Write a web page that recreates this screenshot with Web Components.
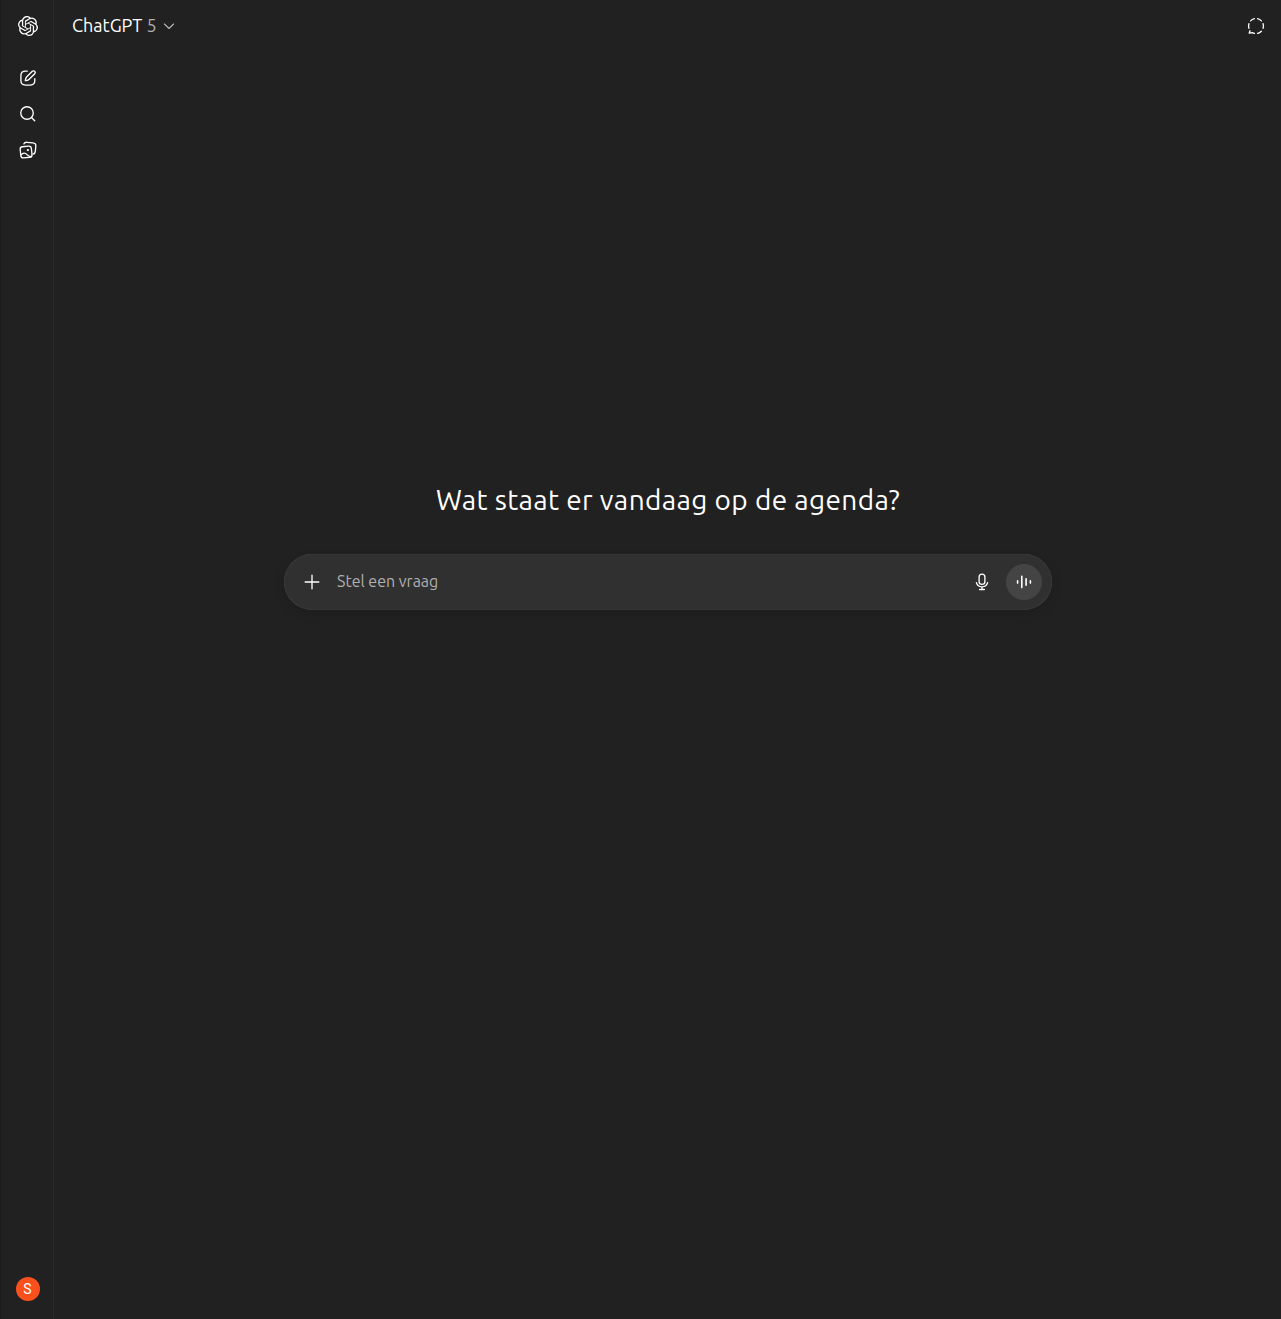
<!DOCTYPE html>
<html lang="nl">
<head>
<meta charset="utf-8">
<title>ChatGPT</title>
<style>
html,body{margin:0;height:100%;background:#212121;color:#fff;font-family:Ubuntu,"Noto Sans","Open Sans",sans-serif}
</style>
</head>
<body>
<chat-app></chat-app>
<script>
const icons = {
  logo: ['0 0 24 24', '<path fill="currentColor" stroke="none" d="M22.2819 9.8211a5.9847 5.9847 0 0 0-.5157-4.9108 6.0462 6.0462 0 0 0-6.5098-2.9A6.0651 6.0651 0 0 0 4.9807 4.1818a5.9847 5.9847 0 0 0-3.9977 2.9 6.0462 6.0462 0 0 0 .7427 7.0966 5.98 5.98 0 0 0 .511 4.9107 6.051 6.051 0 0 0 6.5146 2.9001A5.9847 5.9847 0 0 0 13.2599 24a6.0557 6.0557 0 0 0 5.7718-4.2058 5.9894 5.9894 0 0 0 3.9977-2.9001 6.0557 6.0557 0 0 0-.7475-7.0729zm-9.022 12.6081a4.4755 4.4755 0 0 1-2.8764-1.0408l.1419-.0804 4.7783-2.7582a.7948.7948 0 0 0 .3927-.6813v-6.7369l2.02 1.1686a.071.071 0 0 1 .038.052v5.5826a4.504 4.504 0 0 1-4.4945 4.4944zm-9.6607-4.1254a4.4708 4.4708 0 0 1-.5346-3.0137l.142.0852 4.783 2.7582a.7712.7712 0 0 0 .7806 0l5.8428-3.3685v2.3324a.0804.0804 0 0 1-.0332.0615L9.74 19.9502a4.4992 4.4992 0 0 1-6.1408-1.6464zM2.3408 7.8956a4.485 4.485 0 0 1 2.3655-1.9728V11.6a.7664.7664 0 0 0 .3879.6765l5.8144 3.3543-2.0201 1.1685a.0757.0757 0 0 1-.071 0l-4.8303-2.7865A4.504 4.504 0 0 1 2.3408 7.872zm16.5963 3.8558L13.1038 8.364 15.1192 7.2a.0757.0757 0 0 1 .071 0l4.8303 2.7913a4.4944 4.4944 0 0 1-.6765 8.1042v-5.6772a.79.79 0 0 0-.407-.667zm2.0107-3.0231l-.142-.0852-4.7735-2.7818a.7759.7759 0 0 0-.7854 0L9.409 9.2297V6.8974a.0662.0662 0 0 1 .0284-.0615l4.8303-2.7866a4.4992 4.4992 0 0 1 6.6802 4.66zM8.3065 12.863l-2.02-1.1638a.0804.0804 0 0 1-.038-.0567V6.0742a4.4992 4.4992 0 0 1 7.3757-3.4537l-.142.0805L8.704 5.459a.7948.7948 0 0 0-.3927.6813zm1.0976-2.3654l2.602-1.4998 2.6069 1.4998v2.9994l-2.5974 1.4997-2.6067-1.4997Z"/>'],
  edit: ['0 0 20 20', '<path d="M9.2 3.2H7.3C4.3 3.2 2.9 4.7 2.9 7.7v4.9c0 3 1.4 4.5 4.4 4.5h5c3 0 4.5-1.5 4.5-4.5v-1.9"/><path d="M7.3 12.7c.1-1.7.4-2.8 1.5-3.9l5.5-5.5a1.65 1.65 0 0 1 2.4 2.4l-5.5 5.5c-1.1 1.1-2.2 1.4-3.9 1.5Z"/>'],
  search: ['0 0 20 20', '<circle cx="9" cy="9" r="6.25"/><path d="m13.5 13.5 3.2 3.2"/>'],
  library: ['0 0 20 20', '<rect x="2.5" y="6.4" width="11.2" height="11.2" rx="2.5" transform="rotate(-6 8 12)"/><path d="M5.9 3.9C6.6 2.6 7.6 2.2 9 2.3l5.8.5c2.2.2 3.2 1.3 3 3.4l-.5 5.2c-.1 1.4-.8 2.3-2 2.6M3 14.9c2-2.3 4.2-2.3 6-.3 1 1.1 2.3 1.9 4 2"/><circle cx="9.9" cy="10.1" r="1.15" fill="currentColor" stroke="none"/>'],
  chevron: ['0 0 16 16', '<path d="m3.4 6 4.6 4.5L12.6 6" stroke-width="1.1"/>'],
  temp: ['0 0 20 20', '<path d="M11.6 2.65a7.5 7.5 0 0 1 3.8 2.2M17.1 7.7a7.5 7.5 0 0 1 0 4.6M15.4 15.2a7.5 7.5 0 0 1-3.8 2.15M8.4 17.35a7.5 7.5 0 0 1-2-.75l-3.2.5.8-2.3M2.9 12.3a7.5 7.5 0 0 1 0-4.6M4.6 4.85a7.5 7.5 0 0 1 3.8-2.2"/>'],
  plus: ['0 0 20 20', '<path d="M10 3.2v13.6M3.2 10h13.6"/>'],
  mic: ['0 0 20 20', '<rect x="7.1" y="2.2" width="5.8" height="10.1" rx="2.9"/><path d="M4.4 10.7c.7 2.6 2.8 4.1 5.6 4.1s4.9-1.5 5.6-4.1M10 14.8v2.6M7.6 17.5h4.8"/>'],
  voice: ['0 0 20 20', '<path d="M3.6 8.9v2.2M7.8 4.4v11.2M12.1 6.8v6.4M16.4 8.9v2.2" stroke-width="1.6"/>']
};
const define = (name, markup) => customElements.define(name, class extends HTMLElement {
  constructor() {
    super();
    this.attachShadow({mode: 'open'}).innerHTML = markup;
  }
});
customElements.define('ui-icon', class extends HTMLElement {
  connectedCallback() {
    if (this.shadowRoot) return;
    const [box, shape] = icons[this.getAttribute('name')];
    this.attachShadow({mode: 'open'}).innerHTML = `<style>:host{display:block;flex:none;width:var(--size,20px);height:var(--size,20px)}svg{display:block;width:100%;height:100%}</style><svg viewBox="${box}" fill="none" stroke="currentColor" stroke-width="1.33" stroke-linecap="round" stroke-linejoin="round" aria-hidden="true">${shape}</svg>`;
  }
});
define('user-avatar', `<style>:host{display:flex;align-items:center;justify-content:center;width:24px;height:24px;border-radius:50%;background:#f9501d;color:#fff;font:14px/24px Roboto,"Liberation Sans",sans-serif}</style><slot></slot>`);
define('side-rail', `<style>
:host{display:flex;flex-direction:column;align-items:center;box-sizing:border-box;width:54px;flex:none;padding:16px 0 18px 1px;border-right:1px solid #2b2b2b;border-left:1px solid #1c1c1c}
nav{display:flex;flex-direction:column;gap:16px;margin-top:32px}
user-avatar{margin-top:auto}
</style><ui-icon name="logo"></ui-icon><nav><ui-icon name="edit"></ui-icon><ui-icon name="search"></ui-icon><ui-icon name="library"></ui-icon></nav><user-avatar>S</user-avatar>`);
define('top-bar', `<style>
:host{display:flex;align-items:center;justify-content:space-between;box-sizing:border-box;height:52px;padding:0 15px 0 18px}
.model{display:flex;align-items:center;font-size:18px;line-height:28px;white-space:pre;padding-bottom:2px}
.v{color:#afafaf}.model ui-icon{--size:16px;color:#b4b4b4;margin:2px 0 0 4px}
</style><div class="model"><span>ChatGPT <span class="v">5</span></span><ui-icon name="chevron"></ui-icon></div><ui-icon name="temp"></ui-icon>`);
define('prompt-box', `<style>
:host{display:flex;align-items:center;box-sizing:border-box;width:768px;height:56px;padding:0 10px 0 18px;border-radius:28px;background:#303030;box-shadow:0 4px 12px rgba(0,0,0,.12),inset 0 0 1px rgba(255,255,255,.25)}
.text{flex:1;margin-left:15px;color:#afafaf;font-size:16px;line-height:24px;margin-top:-2px}
.voice{display:flex;align-items:center;justify-content:center;width:36px;height:36px;border-radius:50%;background:#444;margin-left:14px}
</style><ui-icon name="plus"></ui-icon><div class="text"><slot></slot></div><ui-icon name="mic"></ui-icon><div class="voice"><ui-icon name="voice"></ui-icon></div>`);
define('chat-app', `<style>
:host{display:flex;height:100vh;overflow:hidden}
main{flex:1;min-width:0;display:flex;flex-direction:column}
section{display:flex;flex-direction:column;align-items:center;padding:431px 0 0 1px}
h1{margin:0 0 37px;font-size:28px;line-height:34px;font-weight:400;letter-spacing:.38px;white-space:nowrap}
</style><side-rail></side-rail><main><top-bar></top-bar><section><h1>Wat staat er vandaag op de agenda?</h1><prompt-box>Stel een vraag</prompt-box></section></main>`);
</script>
</body>
</html>
